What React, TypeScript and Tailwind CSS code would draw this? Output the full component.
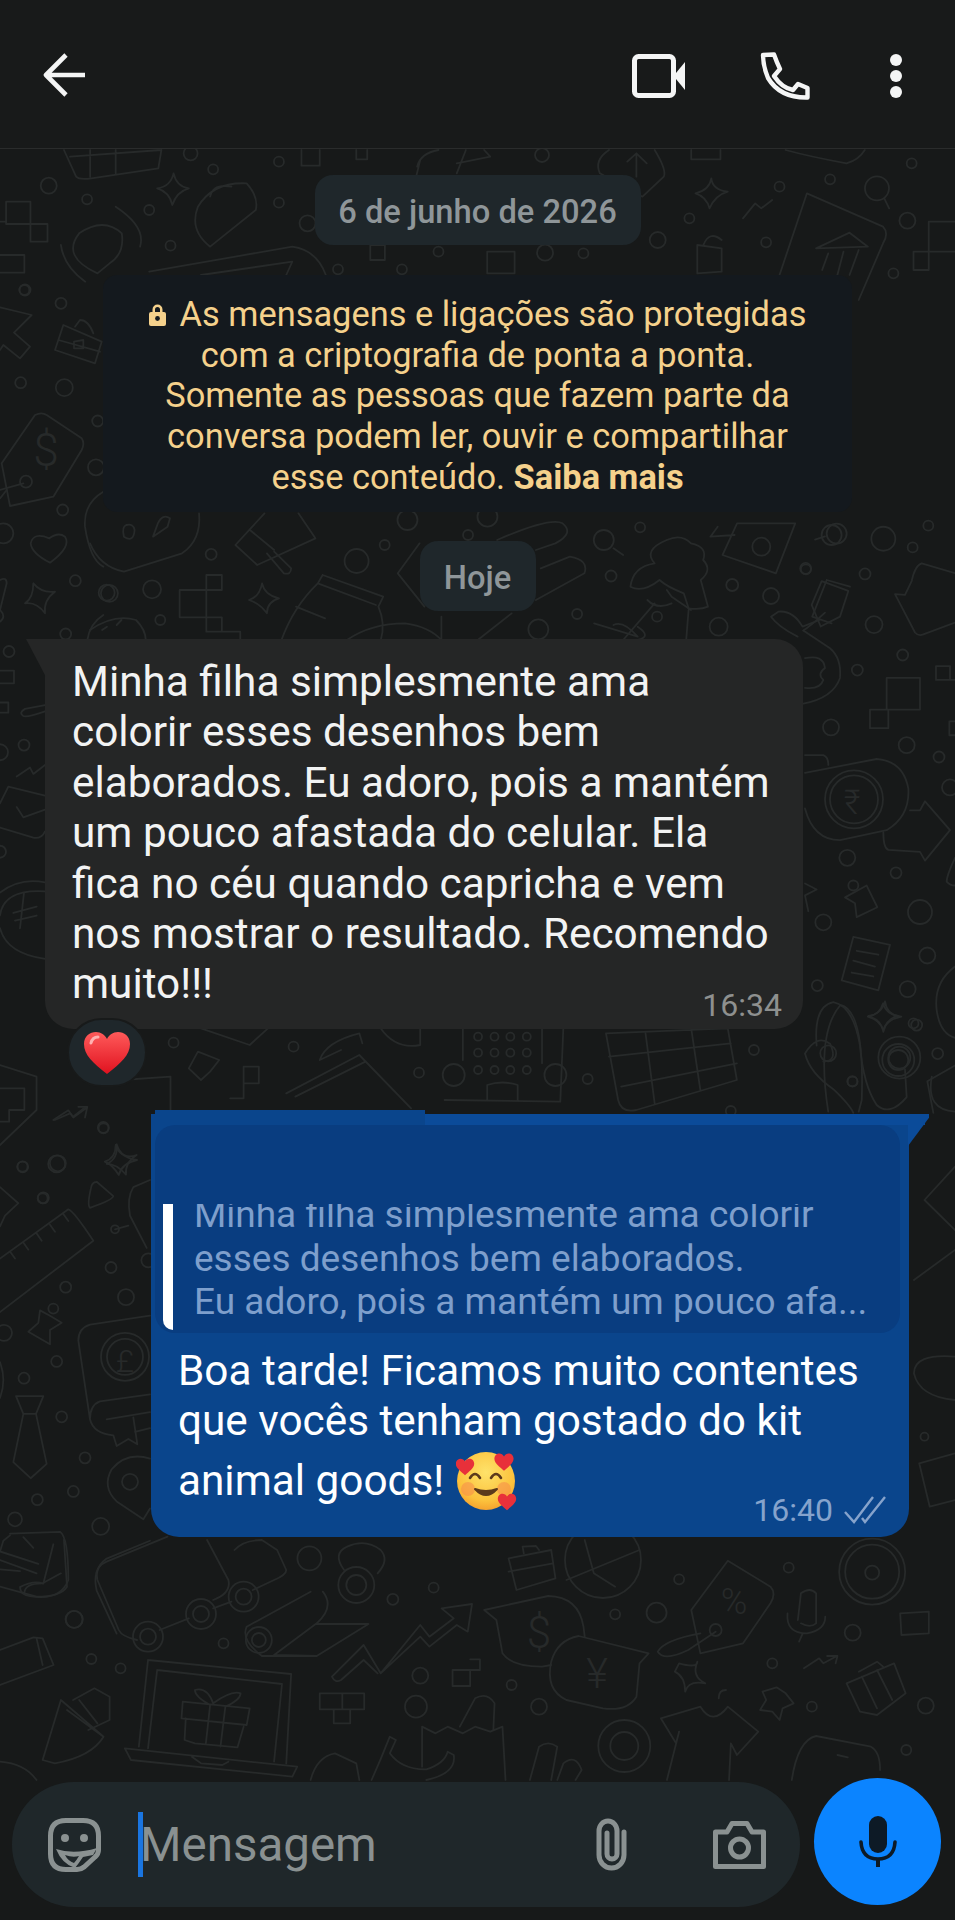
import React from 'react';

type Region = {
  x: number;
  y: number;
  sx: number;
  sy: number;
  paths: string[];
  dots: [number, number, number][];
};

// Wallpaper doodles, traced per area of the screen (coordinates of each area get scaled to the page)
const regions: Region[] = [
  {
    x: 0, y: 0, sx: 0.609, sy: 1 / 3,
    paths: [
      'M105 450 L125 530 Q130 540 150 535 L260 505 L265 450 M115 470 L265 450 M148 450 L148 530 M190 450 L190 520',
      'M495 450 L495 497 L525 497 L525 450 M585 450 L585 478 L603 478 L603 450',
      'M690 480 L682 540 M720 450 Q690 460 685 500 M750 490 L805 470 L795 450 M765 450 L750 520',
      'M1000 450 Q975 480 985 520 L1055 590 L1090 530 Q1095 510 1075 450 M1045 530 L1045 460 M1030 485 L1045 460 L1062 490',
      'M1135 450 L1135 478 L1183 478 L1183 450 M1290 450 Q1330 470 1390 490 Q1410 480 1420 450',
      'M285 520 Q290 560 310 565 Q290 575 283 615 Q278 575 258 565 Q280 560 285 520',
      'M1168 535 Q1170 570 1195 575 Q1175 585 1165 625 Q1160 590 1142 580 Q1165 570 1168 535',
      'M405 550 Q350 545 325 620 Q310 690 345 740 L420 630 Q425 590 405 550 M345 590 Q350 550 380 560',
      'M10 605 L50 605 L50 672 L78 672 L78 725 L50 725 L50 672 M10 605 L10 672 L50 672 M0 665 L10 665 M0 765 L40 765 L40 818 L0 818',
      'M130 700 Q100 770 160 820 L180 790 Q205 760 200 700 Q170 650 130 700 M100 735 Q105 800 140 845 M190 620 Q240 680 230 740',
      'M245 815 L480 740 Q520 750 535 825 M330 825 L480 785 L470 825',
      'M1325 580 L1450 680 Q1460 700 1450 730 L1410 900 M1325 580 L1280 825',
      'M1340 745 L1395 698 L1425 740 Z M1360 760 L1350 810 M1385 755 L1375 825 M1410 750 L1395 825',
      'M1145 735 L1185 745 L1185 815 L1145 820 Z M1155 735 Q1165 690 1185 720',
      'M1568 665 L1525 665 L1525 755 L1500 755 L1500 810 L1525 810 L1525 755 L1568 755',
      'M1220 655 L1240 610 L1250 625 L1268 600 M1452 595 L1460 625',
      'M800 755 L845 755 L845 820 L800 820 Z M608 735 L632 735 L632 780 L608 780 Z',
    ],
    dots: [
      [80, 557, 8], [143, 598, 5], [458, 485, 5], [350, 508, 5], [245, 630, 5], [458, 608, 5], [280, 737, 5],
      [505, 670, 8], [1080, 720, 8], [720, 755, 5], [895, 758, 8], [958, 760, 5], [660, 808, 5], [555, 808, 5],
      [1363, 538, 5], [1280, 560, 5], [1497, 490, 5], [1440, 565, 12], [1132, 655, 5], [1490, 662, 8],
      [1258, 727, 5], [1467, 820, 5], [890, 465, 7], [313, 460, 7], [40, 870, 5],
    ],
  },
  {
    x: 0, y: 150, sx: 1 / 3, sy: 1 / 3,
    paths: [
      'M0 1290 Q20 1280 20 1300 L0 1380 Q20 1400 0 1415',
      'M70 1000 L0 1020 M20 1020 L0 1045',
      'M0 472 L95 495 L42 548 L90 590 L60 625 L10 585 L0 600',
      'M105 795 Q125 785 140 795 L245 865 Q255 880 245 900 L160 1040 L30 1068 L5 940 Z',
      'M148 1165 Q175 1145 195 1160 Q215 1190 150 1238 Q95 1210 92 1180 Q100 1145 148 1165',
      'M100 1300 Q125 1330 165 1325 Q130 1350 135 1390 Q110 1355 75 1360 Q100 1345 100 1300',
      'M190 525 L305 575 L285 640 L165 600 Z M225 530 L240 510 Q265 510 280 550 M175 570 L300 605 M222 575 L250 570 L250 595 L222 595 Z',
      'M310 1025 Q250 1060 255 1130 Q270 1230 310 1250 M310 1395 Q270 1420 262 1470',
    ],
    dots: [
      [193, 713, 8.5], [62, 698, 5.5], [75, 420, 5.5], [183, 460, 5.5], [293, 813, 5.5], [288, 952, 8],
      [188, 1080, 5.5], [226, 1292, 5.5], [197, 1452, 5.5], [10, 1150, 10], [78, 995, 6], [320, 1328, 8],
    ],
  },
  {
    x: 90, y: 510, sx: 760 / 1568, sy: 1 / 3,
    paths: [
      'M0 100 Q20 170 70 185 L190 130 Q230 90 225 10',
      'M75 45 Q65 50 70 80 Q90 100 92 60 Q90 40 75 45 M130 80 L160 50 L165 25 Q150 10 140 40 Z',
      'M360 10 L300 105 L345 165 L465 85 L430 10 M330 60 L380 120 M365 130 L400 190 Q415 195 415 175 L380 125',
      'M240 195 L272 195 L272 240 L240 240 Z M185 240 L240 240 L240 322 L185 322 Z M240 322 L272 322 L272 365 L310 365 L310 390 M240 322 L240 365 L272 365',
      'M355 220 Q360 255 390 265 Q365 275 365 310 Q350 280 328 270 Q350 260 355 220',
      'M480 195 L605 260 L595 290 Q610 340 600 390 M480 195 L470 220 L590 285 M470 220 Q420 290 395 390 M425 290 L485 325',
      'M0 360 Q50 310 95 330 Q115 360 115 390 M25 360 L35 350 M55 345 L65 330',
      'M680 100 L635 190 L690 290 M840 90 Q950 20 975 40 Q1000 70 960 100 L920 120 M930 175 L990 140 Q1030 150 1020 190 L920 270',
      'M725 320 L725 390 M870 310 L800 390 M530 390 Q580 340 650 340 Q700 350 725 390',
      'M1080 115 L1100 135',
      'M1190 90 Q1220 70 1240 100 Q1275 110 1265 150 Q1285 180 1260 210 L1275 290 Q1260 300 1235 295 L1225 250 Q1190 230 1175 210 Q1140 250 1115 230 Q1120 170 1165 160 Q1140 120 1190 90',
      'M1150 270 Q1170 300 1200 280 M1190 240 L1200 260 L1240 300 M1165 280 L1100 390 M1235 300 L1230 390',
      'M1335 40 L1455 40 L1415 190 L1305 135 Z M1280 80 L1330 75 M1295 50 L1280 80',
      'M1520 210 L1568 230 M1520 210 L1490 320 L1530 340 M1505 330 L1470 350 Q1450 300 1420 305 L1405 320 Q1420 350 1460 380',
      'M1040 340 L1130 380 Q1100 330 1080 345 M1130 350 Q1160 380 1130 390',
    ],
    dots: [
      [550, 153, 12], [655, 30, 10], [608, 105, 5], [250, 133, 5.5], [40, 250, 8.5], [128, 238, 9], [145, 330, 5],
      [780, 75, 5], [1135, 52, 5], [1075, 198, 5.5], [1325, 225, 6], [1405, 258, 8], [1477, 178, 5], [1005, 312, 5],
      [925, 358, 10], [1297, 350, 9], [1170, 320, 5], [820, 20, 10], [1060, 90, 10], [1530, 75, 10], [1385, 110, 9],
    ],
  },
  {
    x: 790, y: 500, sx: 1 / 3, sy: 620 / 1568,
    paths: [
      'M105 92 L75 100',
      'M495 185 L395 160 Q375 165 365 205 L345 240 L315 238 L375 335 Q385 345 400 340 L495 310',
      'M95 205 L175 230 L150 295 L92 320 L65 265 Z M105 285 Q60 320 40 330',
      'M40 330 L120 375 Q155 400 150 450 Q130 500 40 515 M45 400 Q100 390 105 425 Q80 440 100 455 Q90 480 45 475',
      'M290 450 L390 450 L390 530 L290 530 Z M240 530 L295 530 L295 577 L240 577 Z M438 420 L480 420 L480 455 L438 455 Z M480 455 L495 455 M478 560 L495 560 M478 560 L478 595 L495 595',
      'M45 690 L260 655 Q340 660 355 730 Q360 800 290 835 L150 860 Q70 860 45 780 M45 645 L100 645 Q115 650 115 670',
      'M360 785 L390 785 L405 762 L480 835 L405 912 L390 890 L295 885 Q280 880 280 840',
      'M165 1005 L230 975 L262 1030 L200 1055 L195 1020 Z',
      'M190 1105 L300 1125 L265 1240 L155 1215 Z M200 1140 L265 1150 M190 1165 L255 1180 M185 1195 L250 1205',
      'M285 1268 Q290 1300 325 1305 Q290 1310 280 1345 Q275 1315 235 1305 Q275 1300 285 1268',
      'M80 1380 Q70 1280 130 1270 Q190 1280 210 1380 Q220 1480 260 1530 Q300 1560 350 1510 L345 1440 M45 1400 Q80 1350 120 1375 Q145 1420 100 1420 M45 1400 Q60 1450 130 1490 Q180 1530 190 1550',
      'M495 1430 L412 1470 L430 1550 M495 1180 Q430 1220 440 1290 Q450 1350 495 1360 M495 905 Q470 950 470 965 Q480 975 495 975',
      'M45 970 L80 985 L45 1000 L55 1040',
    ],
    dots: [
      [280, 98, 12], [415, 65, 5], [368, 120, 5], [47, 173, 5.5], [225, 187, 5.5], [252, 315, 8.5], [338, 392, 5.5],
      [202, 430, 5.5], [123, 575, 8], [350, 620, 8], [447, 650, 5.5], [172, 905, 8], [318, 943, 5.5], [390, 1042, 12],
      [100, 1068, 8], [412, 1152, 8], [82, 1228, 5.5], [353, 1237, 8], [380, 1328, 5.5], [187, 1470, 5], [443, 1400, 5.5],
      [140, 85, 10], [192, 757, 29], [192, 757, 24], [190, 975, 5], [328, 1410, 21], [328, 1410, 11], [480, 727, 8],
    ],
  },
  {
    x: 0, y: 640, sx: 1 / 3, sy: 400 / 1568,
    paths: [
      'M0 120 L42 120 L42 170 L0 170 M0 245 L25 245 L25 285 L0 285',
      'M135 255 L75 270 Q55 285 70 298 Q80 305 135 280 M125 70 Q115 100 135 110',
      'M50 535 L90 500 L100 525 L135 490',
      'M0 640 L25 575 L135 610 M135 750 Q125 780 100 775 L0 735 M50 655 L70 695 L135 665',
      'M0 990 Q60 930 135 950 M0 1080 Q10 975 135 985 M0 1130 Q20 1230 135 1250',
      'M72 990 L60 1130 M40 1070 L110 1045 M45 1100 L110 1080',
    ],
    dots: [[27, 45, 5.5], [72, 412, 5.5], [0, 440, 8], [0, 830, 6]],
  },
  {
    x: 0, y: 1000, sx: 0.609, sy: 1 / 3,
    paths: [
      'M330 85 L410 135 L440 85 M625 85 Q650 150 690 135 L690 85',
      'M730 300 L920 305 L925 85 M760 85 L760 180 M890 85 L890 190 M800 300 L800 255 Q825 240 850 255 L850 300',
      'M995 100 L1195 85 L1210 240 L1045 330 Q1020 340 1015 300 Z M1000 170 L1200 130 M1020 260 L1210 190 M1060 100 L1075 310 M1135 85 L1150 270',
      'M470 280 L590 165 L675 325 M485 290 L600 185 M560 150 L525 180 Q535 125 590 100 L595 130',
      'M310 205 L325 155 L360 180 L345 215 L330 240 Z M378 295 L400 295 L400 200 L425 200 L425 250 L400 250',
      'M200 240 L280 230 L280 330',
      'M0 195 L60 230 L60 330 L0 435 M0 265 L40 265 L40 330 L15 330 L15 365 L0 365',
      'M90 360 L115 340 L120 350 L140 322',
      'M190 435 Q195 470 225 480 Q200 490 195 525 Q185 495 172 485 Q190 475 190 435',
      'M1360 335 Q1340 100 1380 15 Q1420 30 1415 300 L1410 335 M1530 230 Q1520 330 1568 335',
      'M1450 10 Q1455 45 1480 50 Q1455 60 1450 90 Q1445 60 1425 50 Q1445 45 1450 10',
    ],
    dots: [
      [285, 128, 5], [482, 140, 5], [688, 218, 5], [965, 237, 5], [1238, 150, 5], [1400, 245, 5],
      [745, 225, 11], [912, 225, 11], [785, 110, 4], [812, 110, 4], [838, 110, 4], [865, 110, 4],
      [785, 158, 4], [812, 158, 4], [838, 158, 4], [865, 158, 4], [785, 210, 4], [812, 210, 4], [838, 210, 4], [865, 210, 4],
      [170, 385, 5], [37, 500, 5], [95, 490, 8], [70, 595, 5], [1360, 160, 8], [1475, 180, 16], [1475, 180, 10], [1500, 70, 5], [1200, 333, 5],
    ],
  },
  {
    x: 0, y: 1080, sx: 1 / 3, sy: 560 / 1568,
    paths: [
      'M160 112 L205 85 L220 105 L260 78 M235 75 L262 75 L255 105',
      'M350 180 Q365 225 410 210 Q375 230 378 265 Q350 235 320 235 Q355 220 350 180',
      'M290 285 L340 325 Q340 335 270 358 Q260 350 275 295 Q280 285 290 285',
      'M0 500 L205 362 Q220 365 280 450 L0 650 M30 480 L45 500 M70 455 L85 475 M110 430 L125 450 M150 405 L165 425 M190 375 L205 395',
      'M120 645 L150 660 L185 680 L150 700 L150 740 L85 705 L115 680 Z',
      'M450 660 L270 685 Q235 695 235 730 L270 950 Q280 990 340 995 L350 1025 L385 1005 L412 1020 L400 945 M450 880 L300 900 Q270 910 270 950 M320 950 L450 930 M405 985 L450 975',
      'M48 885 L130 885 L108 935 L140 1075 L92 1115 L40 1070 L70 935 Z M70 935 L108 935',
      'M450 1060 Q380 1040 335 1090 Q305 1140 350 1180 L430 1230 L450 1200',
      'M0 300 L55 345 L15 380 L0 410 M0 790 Q20 840 0 890',
      'M0 1320 L10 1290 L30 1275 M0 1320 L115 1355 M0 1370 L60 1375 M30 1270 L180 1265 Q205 1280 205 1400 Q180 1460 90 1445 Q60 1440 60 1420 Q100 1400 130 1410 L160 1300 M70 1280 L100 1310',
      'M450 1290 L320 1340 Q275 1370 290 1430 L350 1550',
      'M345 418 L385 408 M450 280 L400 300 Q380 330 390 380 L440 470',
    ],
    dots: [
      [310, 133, 5.5], [68, 243, 5.5], [170, 235, 8.5], [130, 330, 5.5], [333, 525, 5.5], [197, 580, 5.5], [378, 608, 8],
      [12, 708, 8], [170, 788, 5.5], [72, 835, 5.5], [185, 943, 5.5], [255, 1058, 5.5], [220, 1152, 5.5], [112, 1175, 5.5],
      [302, 1250, 8.5], [222, 1510, 8.5], [160, 640, 5], [375, 775, 24], [375, 775, 18], [390, 1125, 8], [345, 418, 4],
      [445, 505, 7], [45, 1230, 7],
    ],
  },
  {
    x: 130, y: 1090, sx: 825 / 1568, sy: 1 / 3,
    paths: [
      'M1568 230 L1510 330 L1568 420 M1490 570 L1568 480 M1568 800 Q1490 790 1490 850 Q1500 920 1568 930',
      'M1500 1120 L1568 1090 M1500 1120 L1520 1250 L1568 1230',
    ],
    dots: [[1510, 1040, 4]],
  },
  {
    x: 0, y: 1530, sx: 955 / 1568, sy: 1 / 3,
    paths: [
      'M0 170 L60 200 Q100 200 110 170 L105 30 M40 190 Q40 160 70 160 L100 130 M0 90 L60 130',
      'M275 20 L175 95 Q155 110 160 150 L195 300 Q200 320 225 330 M340 30 L375 150 Q380 190 350 210 M385 60 Q400 30 430 30 L455 60 L470 120 Q470 135 450 150 L415 180',
      'M262 300 L310 265 M350 235 L380 215',
      'M565 120 Q545 70 570 50 Q600 25 625 60 Q640 90 620 130',
      'M510 185 L405 290 M530 185 Q550 230 520 280 L450 375 L520 378 L605 282 L520 282 M405 290 Q395 330 430 378 L520 378',
      'M545 440 L597 345 L625 430 L690 285 L705 320 L745 265 L725 235 L775 222 L768 305 L750 285 L705 350 L690 320 L625 430 M545 440 Q550 460 560 450 L597 390 L620 430',
      'M795 240 L900 198 Q950 200 958 290 L960 320 M795 240 L815 270 L825 370 Q840 410 890 410 L905 405',
      'M905 395 Q915 330 950 318 L1065 370 L1050 400 L1045 500 Q1030 545 990 535 L930 510 Q895 480 905 395',
      'M1195 92 L1265 170 Q1275 190 1265 220 L1220 340 L1150 370 L1135 240 Z M1150 310 Q1090 330 1080 365 Q1090 395 1130 360 L1175 305',
      'M1310 270 L1315 190 Q1330 170 1340 190 L1340 280 Q1330 295 1315 280 M1293 250 Q1290 310 1325 310 Q1355 300 1355 260 M1318 310 L1312 335',
      'M930 150 L1050 60 M960 30 L975 130 L1010 170',
      'M835 85 L905 60 L912 145 L848 180 Z M860 70 L858 50 L880 48 L885 60 M835 125 L908 100',
      'M1320 415 L1345 385 L1352 400 L1372 380 M1358 378 L1375 378 L1372 400',
      'M1390 460 L1468 400 L1487 490 L1440 555 L1412 545 Z M1410 425 L1440 395 L1450 410 M1415 440 L1440 535 M1440 420 L1465 510',
      'M1275 472 L1290 490 L1303 520 L1285 535 L1280 570 L1268 545 L1248 540 L1258 510 L1252 485 Z',
      'M1115 400 Q1145 415 1145 395 Q1135 440 1158 460 Q1130 450 1125 485 Q1125 440 1108 425 Z',
      'M1085 565 L1150 530 Q1170 590 1195 530 L1245 605 L1210 675 L1200 640 L1197 750 M1085 565 L1110 640 L1115 605 L1095 750 M1180 505 Q1180 480 1192 480',
      'M243 390 L478 432 L470 700 M243 390 L228 650 M258 420 L463 462 L450 695 M258 420 L243 655 M205 655 L488 710 L480 740 L215 690 Z M315 680 L330 700 L365 705 L375 695',
      'M300 515 L410 535 L405 585 L298 565 Z M305 565 L303 630 L320 640 L390 652 L400 590 M345 525 L338 640 M370 530 L362 650 M345 525 Q320 500 320 480 Q340 470 350 520 Q380 480 395 490 Q395 510 370 530',
      'M70 690 L100 510 L170 620 Q150 680 90 700 L70 690 M120 510 L155 475 L180 500 L180 570 L145 600 M110 540 L170 620 M130 510 L160 580',
      'M525 490 L598 490 L598 538 L525 538 Z M562 490 L562 538 M548 538 L548 580 L575 580 L575 538',
      'M743 420 L772 420 L772 468 L743 468 Z M772 388 L788 388 L788 420 L772 420',
      'M693 590 L693 710 M693 590 L715 610 L735 590 L760 610 L780 590 L805 605 L825 590 L830 750 M755 590 L780 505 Q800 485 812 520 L810 600',
      'M610 750 Q625 690 640 620 L650 630 L640 670 Q660 720 700 718 Q730 700 735 665 L745 675 Q750 730 700 750',
      'M510 750 Q520 680 550 670 L585 700 L590 750 M870 750 L885 650 Q900 630 915 650 L905 750 M915 750 L925 700 Q945 670 955 720 L945 750',
      'M1300 750 Q1310 630 1340 618 L1430 650 Q1445 665 1445 720 M1375 675 L1392 682',
      'M0 360 L55 322 L70 325 L88 405 L0 465 M60 325 L70 405',
      'M1478 250 L1525 245 L1525 310 L1480 315 Z',
      'M0 695 Q40 700 60 750',
    ],
    dots: [
      [508, 85, 12], [645, 208, 5.5], [712, 173, 5], [122, 268, 8.5], [367, 340, 5], [150, 387, 5], [198, 415, 5],
      [1115, 148, 5], [1295, 113, 5], [1010, 253, 5], [1078, 248, 10], [1400, 308, 8], [1268, 400, 5], [690, 437, 8],
      [840, 465, 5], [683, 530, 11], [885, 530, 8], [1333, 530, 5], [1520, 527, 8], [1488, 660, 5],
      [243, 320, 15], [243, 320, 8], [330, 252, 15], [330, 252, 8], [400, 200, 15], [400, 200, 8],
      [585, 165, 18], [585, 165, 10], [425, 330, 13], [425, 330, 7], [1432, 125, 33], [1432, 125, 27], [1432, 128, 7],
      [990, 90, 38], [1175, 300, 6], [1025, 648, 26], [1025, 648, 14],
    ],
  },
];

function Wallpaper() {
  return (
    <svg className="absolute inset-0" width={955} height={1920} viewBox="0 0 955 1920" fill="none" aria-hidden="true">
      {regions.map((r, i) => (
        <g key={i} stroke="#272a2a" strokeWidth={1.8} strokeLinecap="round" strokeLinejoin="round">
          <g transform={`translate(${r.x} ${r.y}) scale(${r.sx} ${r.sy})`}>
            {r.paths.map((d, j) => (
              <path key={j} d={d} vectorEffect="non-scaling-stroke" />
            ))}
          </g>
          {r.dots.map(([x, y, rad], j) => (
            <circle key={j} cx={r.x + x * r.sx} cy={r.y + y * r.sy} r={rad} />
          ))}
        </g>
      ))}
      <g fill="#272a2a" fontFamily="Roboto, sans-serif" fontWeight={300} textAnchor="middle">
        <text x={46} y={466} fontSize={46}>$</text>
        <text x={539} y={1648} fontSize={44}>$</text>
        <text x={597} y={1688} fontSize={42}>¥</text>
        <text x={734} y={1614} fontSize={36}>%</text>
        <text x={852} y={814} fontSize={34}>₹</text>
        <text x={125} y={1372} fontSize={32}>£</text>
      </g>
    </svg>
  );
}

function HeartEmoji() {
  return (
    <svg width={48} height={44} viewBox="0 0 48 44">
      <defs>
        <linearGradient id="heartFill" x1="0" y1="0" x2="0" y2="1">
          <stop offset="0" stopColor="#ff5a5a" />
          <stop offset="1" stopColor="#e0121f" />
        </linearGradient>
      </defs>
      <path d="M24 43 C10 32 1 24 1 13 C1 5 7 1 13 1 C18 1 22 4 24 8 C26 4 30 1 35 1 C41 1 47 5 47 13 C47 24 38 32 24 43 Z" fill="url(#heartFill)" />
      <path d="M8 12 C9 8 12 6 15 6" stroke="#ffb0b0" strokeWidth={3} strokeLinecap="round" fill="none" />
    </svg>
  );
}

function FaceEmoji() {
  const heart = 'M0 -3 C-2 -7 -8 -6 -8 -1 C-8 3 -3 6 0 9 C3 6 8 3 8 -1 C8 -6 2 -7 0 -3 Z';
  return (
    <svg width={61} height={60} viewBox="0 0 61 60">
      <defs>
        <radialGradient id="faceFill" cx="0.5" cy="0.35" r="0.7">
          <stop offset="0" stopColor="#fee26a" />
          <stop offset="0.7" stopColor="#fcc23c" />
          <stop offset="1" stopColor="#f39a2b" />
        </radialGradient>
      </defs>
      <circle cx={30} cy={30} r={29} fill="url(#faceFill)" />
      <circle cx={12} cy={38} r={7} fill="#f58a4a" opacity={0.55} />
      <circle cx={48} cy={38} r={7} fill="#f58a4a" opacity={0.55} />
      <path d="M14 27 Q19 19 24 27 M35 27 Q40 19 45 27" stroke="#5c3a1c" strokeWidth={2.6} fill="none" strokeLinecap="round" />
      <path d="M19 38 Q30 50 41 38 Q30 42 19 38 Z" fill="#5c3a1c" stroke="#5c3a1c" strokeWidth={2} strokeLinejoin="round" />
      <path d={heart} transform="translate(48 9) scale(1.2)" fill="#e8303a" />
      <path d={heart} transform="translate(9 14) scale(1.15)" fill="#e8303a" />
      <path d={heart} transform="translate(51 49) scale(1.15)" fill="#e8303a" />
    </svg>
  );
}

function Header() {
  return (
    <header className="relative h-[149px] shrink-0 border-b border-[#2a2c2c] bg-[#181a1a] flex items-start justify-between pl-[43px] pr-[53px] pt-[52px]">
      <svg width={44} height={44} viewBox="0 0 44 44" fill="none" className="mt-[1px]">
        <path d="M42 22 H3 M23 2 L3 22 L23 42" stroke="#f4f5f5" strokeWidth={4.6} strokeLinejoin="round" />
      </svg>
      <div className="flex items-start">
        <svg width={54} height={44} viewBox="0 0 54 44" className="mt-[2px]">
          <rect x={2.5} y={2.5} width={39} height={39} rx={4} fill="none" stroke="#f4f5f5" strokeWidth={5} />
          <path d="M44 19 L53 8 V36 L44 25 Z" fill="#f4f5f5" />
        </svg>
        <svg width={50} height={48} viewBox="0 0 50 48" fill="none" className="ml-[74px]">
          <path d="M3 3 L14 2.5 Q17 11 20 17 L14 24 Q22 36 33 38 L38 32 L47.5 36 L47.5 45.5 Q20 46 8 26 Q3 14 3 3 Z" stroke="#f4f5f5" strokeWidth={4.4} strokeLinejoin="round" />
        </svg>
        <svg width={12} height={44} viewBox="0 0 12 44" className="ml-[80px] mt-[2px]">
          <circle cx={6} cy={6} r={6} fill="#f4f5f5" />
          <circle cx={6} cy={22} r={6} fill="#f4f5f5" />
          <circle cx={6} cy={38} r={6} fill="#f4f5f5" />
        </svg>
      </div>
    </header>
  );
}

function SystemPill({ text, className }: { text: string; className: string }) {
  return (
    <div className={`self-center h-[70px] pt-[6px] rounded-[18px] bg-[#1f272b] flex items-center justify-center text-[#8f9699] text-[32.7px] font-medium ${className}`}>
      {text}
    </div>
  );
}

function EncryptionNotice() {
  return (
    <div className="self-center w-[749px] h-[237px] mt-[30px] rounded-[14px] bg-[#14191e] pt-[19px] text-center text-[#f5d18c] text-[34.4px] leading-[40.7px]">
      <div className="flex items-center justify-center gap-[14px]">
        <svg width={17} height={23} viewBox="0 0 17 23">
          <path d="M3.5 9 V6.5 a5 5 0 0 1 10 0 V9 h1.5 a2 2 0 0 1 2 2 v10 a2 2 0 0 1 -2 2 H2 a2 2 0 0 1 -2 -2 V11 a2 2 0 0 1 2 -2 Z M6 9 h5 V6.5 a2.5 2.5 0 0 0 -5 0 Z" fill="#f5d18c" fillRule="evenodd" />
          <circle cx={8.5} cy={15.5} r={2.4} fill="#14191e" />
        </svg>
        <span>As mensagens e ligações são protegidas</span>
      </div>
      <div>com a criptografia de ponta a ponta.</div>
      <div>Somente as pessoas que fazem parte da</div>
      <div>conversa podem ler, ouvir e compartilhar</div>
      <div>
        esse conteúdo. <span className="font-bold">Saiba mais</span>
      </div>
    </div>
  );
}

function IncomingMessage() {
  const lines = [
    'Minha filha simplesmente ama',
    'colorir esses desenhos bem',
    'elaborados. Eu adoro, pois a mantém',
    'um pouco afastada do celular. Ela',
    'fica no céu quando capricha e vem',
    'nos mostrar o resultado. Recomendo',
    'muito!!!',
  ];
  return (
    <div className="relative ml-[45px] mt-[28px] w-[758px] h-[390px] rounded-[28px] rounded-tl-none bg-[#252626] pl-[27px] pt-[18px] text-[#f2f3f3] text-[42.3px] leading-[50.4px]">
      <div className="absolute left-[-19px] top-0 w-[20px] h-[38px] bg-[#252626] [clip-path:polygon(0_0,100%_0,100%_100%)]" />
      {lines.map((line) => (
        <div key={line}>{line}</div>
      ))}
      <span className="absolute right-[21px] bottom-[4px] text-[32px] leading-[40px] text-[#8e908f]">16:34</span>
    </div>
  );
}

function Reaction() {
  return (
    <div className="relative z-10 ml-[67px] mt-[-11px] w-[80px] h-[69px] rounded-full bg-[#1f272b] border-2 border-[#181a1a] flex items-center justify-center">
      <HeartEmoji />
    </div>
  );
}

function OutgoingMessage() {
  return (
    <div className="relative ml-[151px] mt-[27px] w-[758px] h-[423px] rounded-b-[28px] bg-[#0a458c] text-white">
      {/* top strip + tail */}
      <div className="absolute left-[274px] top-0 w-[500px] h-[11px] bg-[#0b4b99]" />
      <div className="absolute right-[-20px] top-0 w-[21px] h-[32px] bg-[#0b4b99] [clip-path:polygon(0_0,100%_0,100%_12%,0_100%)]" />
      <div className="absolute left-[4px] top-[-4px] w-[270px] h-[15px] bg-[#0a458c]" />

      <div className="relative ml-[4px] mr-[9px] mt-[11px] h-[208px] rounded-[20px] bg-[#093d80] pt-[79px] flex">
        <div className="ml-[8px] w-[10px] h-[126px] rounded-bl-[12px] bg-white" />
        <div className="ml-[21px] h-[126px] overflow-hidden text-[#7e9fcc] text-[37px] leading-[43.5px]">
          <div className="mt-[-11px]">
            <div>Minha filha simplesmente ama colorir</div>
            <div>esses desenhos bem elaborados.</div>
            <div>Eu adoro, pois a mantém um pouco afa...</div>
          </div>
        </div>
      </div>

      <div className="pl-[27px] mt-[13px] text-[42.3px] leading-[50px]">
        <div>Boa tarde! Ficamos muito contentes</div>
        <div>que vocês tenham gostado do kit</div>
        <div className="h-[70px] flex items-center gap-[12px]">
          <span>animal goods!</span>
          <FaceEmoji />
        </div>
      </div>

      <div className="absolute right-[22px] bottom-[7px] flex items-center gap-[10px] text-[#86a3cc] text-[32px] leading-[40px]">
        <span>16:40</span>
        <svg width={44} height={28} viewBox="0 0 44 28" fill="none">
          <path d="M2 16 L11 26 L30 1 M19 22 L22 26 L42 1" stroke="#86a3cc" strokeWidth={2.4} />
        </svg>
      </div>
    </div>
  );
}

function Composer() {
  return (
    <footer className="relative shrink-0 h-[129px] mb-[13px] ml-[12px] flex items-start">
      <div className="mt-[4px] w-[788px] h-[125px] rounded-[62px] bg-[#1f272a] flex items-center pl-[36px]">
        <svg width={53} height={54} viewBox="0 0 53 54" fill="none">
          <path d="M18 2.5 H35 Q50.5 2.5 50.5 18 V32 Q50.5 36 47 39 L36 49 Q33 51.5 29 51.5 H18 Q2.5 51.5 2.5 36 V18 Q2.5 2.5 18 2.5 Z" stroke="#8a9191" strokeWidth={5} />
          <circle cx={17} cy={20} r={4} fill="#8a9191" />
          <circle cx={36} cy={20} r={4} fill="#8a9191" />
          <path d="M8 31 Q26 37 49 30 L45 37 L35 39 Q31 45 27 50 Q14 46 8 31 Z" fill="#8a9191" />
          <path d="M17 37 Q25 40 31 38 Q28 43 26 45 Q20 43 17 37 Z" fill="#1f272a" />
        </svg>
        <div className="ml-[37px] w-[5px] h-[65px] bg-[#1a75e0]" />
        <span className="text-[#8a9191] text-[47.5px] leading-none ml-[-3px] mt-[2px] w-[455px]">Mensagem</span>
        <svg width={33} height={53} viewBox="0 0 33 53" fill="none">
          <path d="M29 14 V37 A12.5 13 0 0 1 4 37 V13 A9 10 0 0 1 22 13 V36 A5 5 0 0 1 12 36 V15" stroke="#8a9191" strokeWidth={5} strokeLinecap="round" />
        </svg>
        <svg width={53} height={48} viewBox="0 0 53 48" fill="none" className="ml-[85px]">
          <path d="M2.5 11 H14 L19 2.5 H34 L39 11 H50.5 V45.5 H2.5 Z" stroke="#8a9191" strokeWidth={5} strokeLinejoin="round" />
          <circle cx={26.5} cy={27} r={9} stroke="#8a9191" strokeWidth={5} />
        </svg>
      </div>
      <div className="ml-[14px] w-[127px] h-[127px] rounded-full bg-[#0b84ff] flex items-center justify-center">
        <svg width={38} height={52} viewBox="0 0 38 52" fill="none">
          <rect x={10} y={0} width={18} height={37} rx={9} fill="#0d1a26" />
          <path d="M2 26 Q3 43 19 43 Q35 43 36 26" stroke="#0d1a26" strokeWidth={3.6} strokeLinecap="round" />
          <path d="M19 43 V51" stroke="#0d1a26" strokeWidth={4} />
        </svg>
      </div>
    </footer>
  );
}

export default function App() {
  return (
    <div className="relative w-[955px] h-[1920px] overflow-hidden bg-[#171919] flex flex-col font-['Roboto',sans-serif]">
      <Wallpaper />
      <Header />
      <main className="relative flex-1 flex flex-col">
        <SystemPill text="6 de junho de 2026" className="mt-[26px] w-[326px]" />
        <EncryptionNotice />
        <SystemPill text="Hoje" className="mt-[29px] w-[116px]" />
        <IncomingMessage />
        <Reaction />
        <OutgoingMessage />
      </main>
      <Composer />
    </div>
  );
}
